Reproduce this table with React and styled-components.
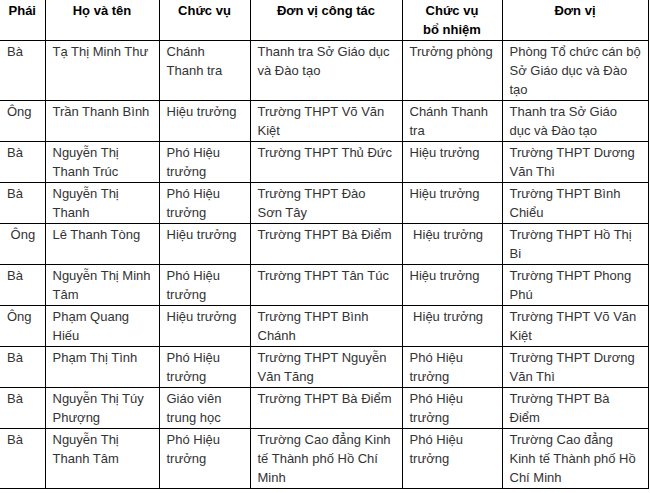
import React from 'react'
import styled, { createGlobalStyle } from 'styled-components'

const GlobalStyle = createGlobalStyle`
  html, body {
    margin: 0;
    padding: 0;
    background: #fff;
  }
  body {
    font-family: 'Liberation Sans', Arial, sans-serif;
  }
`

const Table = styled.table`
  border-collapse: collapse;
  table-layout: fixed;
  width: 648px;
  font-size: 13px;
  line-height: 19px;
`

const HeadCell = styled.th`
  border: 1px solid #000;
  border-top: none;
  padding: 1px 4px 1px;
  font-weight: bold;
  color: #000;
  text-align: center;
  vertical-align: top;
  &:first-child {
    border-left: none;
  }
`

const Cell = styled.td`
  border: 1px solid #000;
  padding: 1px 7px 1px;
  color: #333;
  text-align: left;
  vertical-align: top;
  &:first-child {
    border-left: none;
  }
`

const Line = styled.span`
  display: block;
  white-space: nowrap;
`

const columns = [
  { title: ['Phái'], width: 45 },
  { title: ['Họ và tên'], width: 114 },
  { title: ['Chức vụ'], width: 91 },
  { title: ['Đơn vị công tác'], width: 152 },
  { title: ['Chức vụ', 'bổ nhiệm'], width: 100 },
  { title: ['Đơn vị'], width: 146 },
]

const NB = '\u00a0'

// each cell is a list of the lines it shows
const rows = [
  [['Bà'], ['Tạ Thị Minh Thư'], ['Chánh', 'Thanh tra'], ['Thanh tra Sở Giáo dục', 'và Đào tạo'], ['Trưởng phòng'], ['Phòng Tổ chức cán bộ', 'Sở Giáo dục và Đào', 'tạo']],
  [['Ông'], ['Trần Thanh Bình'], ['Hiệu trưởng'], ['Trường THPT Võ Văn', 'Kiệt'], ['Chánh Thanh', 'tra'], ['Thanh tra Sở Giáo', 'dục và Đào tạo']],
  [['Bà'], ['Nguyễn Thị', 'Thanh Trúc'], ['Phó Hiệu', 'trưởng'], ['Trường THPT Thủ Đức'], ['Hiệu trưởng'], ['Trường THPT Dương', 'Văn Thì']],
  [['Bà'], ['Nguyễn Thị', 'Thanh'], ['Phó Hiệu', 'trưởng'], ['Trường THPT Đào', 'Sơn Tây'], ['Hiệu trưởng'], ['Trường THPT Bình', 'Chiểu']],
  [[NB + 'Ông'], ['Lê Thanh Tòng'], ['Hiệu trưởng'], ['Trường THPT Bà Điểm'], [NB + 'Hiệu trưởng'], ['Trường THPT Hồ Thị', 'Bi']],
  [['Bà'], ['Nguyễn Thị Minh', 'Tâm'], ['Phó Hiệu', 'trưởng'], ['Trường THPT Tân Túc'], ['Hiệu trưởng'], ['Trường THPT Phong', 'Phú']],
  [['Ông'], ['Phạm Quang', 'Hiếu'], ['Hiệu trưởng'], ['Trường THPT Bình', 'Chánh'], [NB + 'Hiệu trưởng'], ['Trường THPT Võ Văn', 'Kiệt']],
  [['Bà'], ['Phạm Thị Tình'], ['Phó Hiệu', 'trưởng'], ['Trường THPT Nguyễn', 'Văn Tăng'], ['Phó Hiệu', 'trưởng'], ['Trường THPT Dương', 'Văn Thì']],
  [['Bà'], ['Nguyễn Thị Túy', 'Phượng'], ['Giáo viên', 'trung học'], ['Trường THPT Bà Điểm'], ['Phó Hiệu', 'trưởng'], ['Trường THPT Bà', 'Điểm']],
  [['Bà'], ['Nguyễn Thị', 'Thanh Tâm'], ['Phó Hiệu', 'trưởng'], ['Trường Cao đẳng Kinh', 'tế Thành phố Hồ Chí', 'Minh'], ['Phó Hiệu', 'trưởng'], ['Trường Cao đẳng', 'Kinh tế Thành phố Hồ', 'Chí Minh']],
]

const Lines = ({ lines }) =>
  lines.map((text, k) => <Line key={k}>{text}</Line>)

const App = () => {
  return (
    <>
      <GlobalStyle />
      <Table>
        <colgroup>
          {columns.map((col, i) => (
            <col key={i} style={{ width: col.width }} />
          ))}
        </colgroup>
        <thead>
          <tr>
            {columns.map((col, i) => (
              <HeadCell key={i}>
                <Lines lines={col.title} />
              </HeadCell>
            ))}
          </tr>
        </thead>
        <tbody>
          {rows.map((row, i) => (
            <tr key={i}>
              {row.map((cell, j) => (
                <Cell key={j}>
                  <Lines lines={cell} />
                </Cell>
              ))}
            </tr>
          ))}
        </tbody>
      </Table>
    </>
  )
}

export default App
